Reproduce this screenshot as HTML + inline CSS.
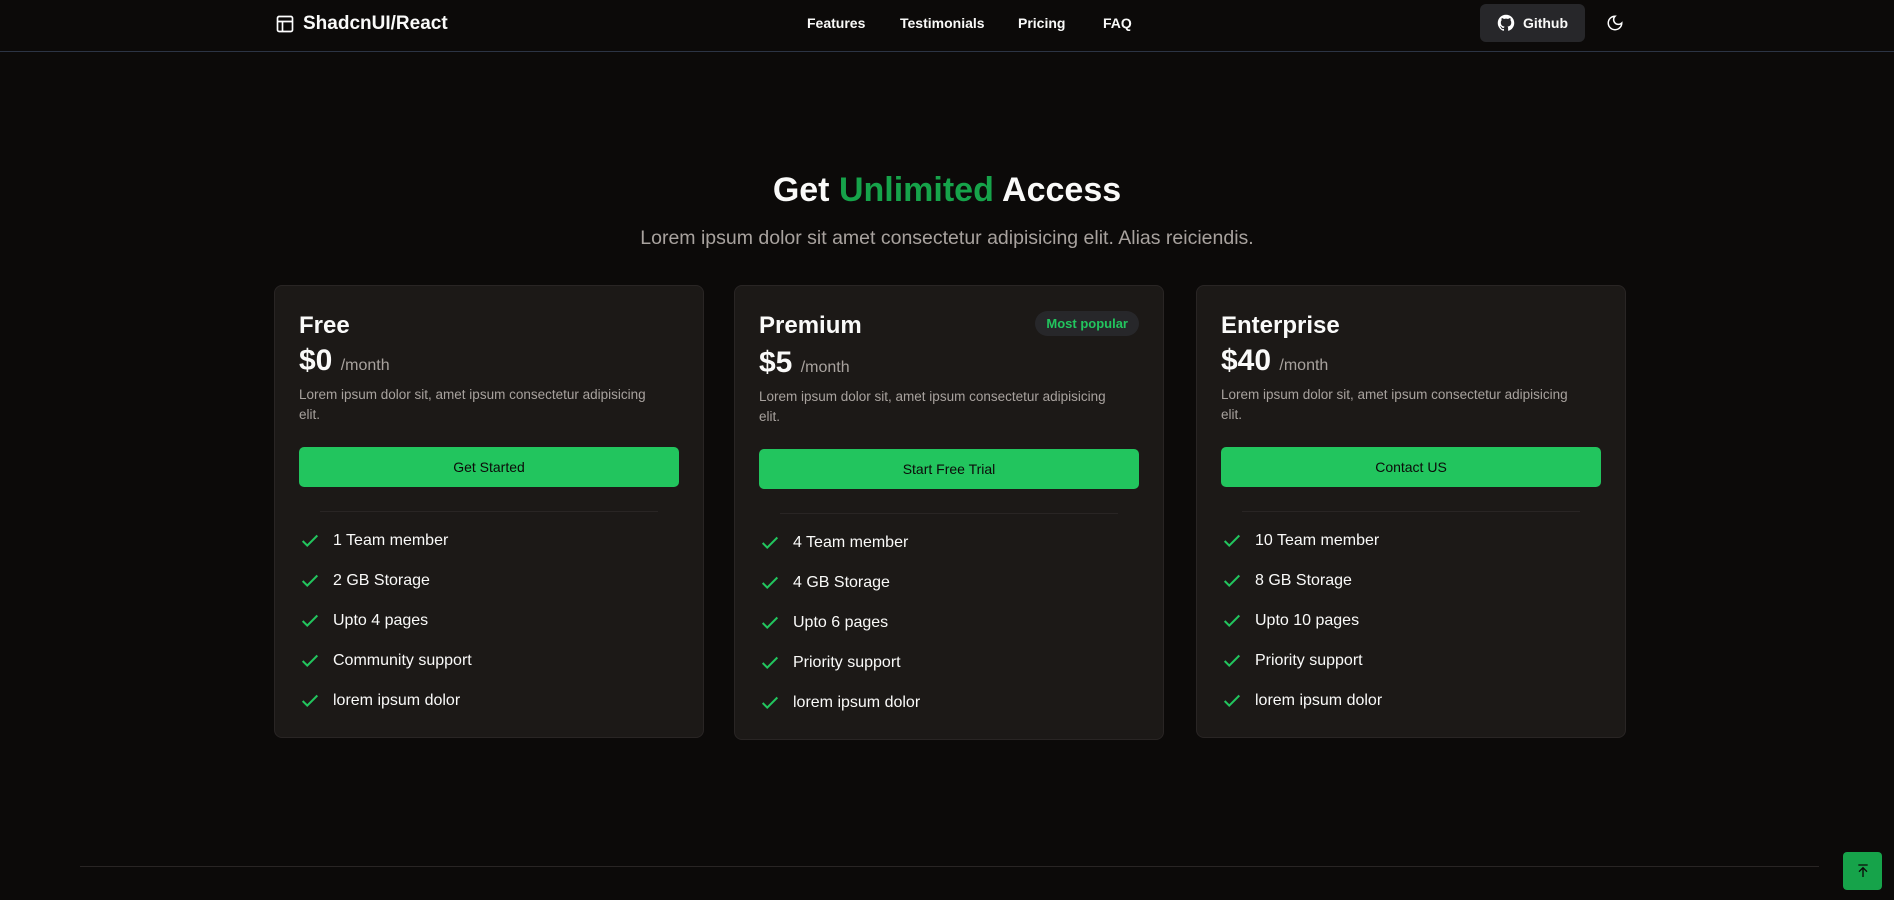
<!DOCTYPE html>
<html><head><meta charset="utf-8"><style>
*{box-sizing:border-box;margin:0;padding:0}
body{width:1894px;height:900px;background:#0c0a09;color:#fafaf9;font-family:"Liberation Sans",sans-serif;position:relative;overflow:hidden}
.nav{position:absolute;left:0;top:0;width:1894px;height:52px;border-bottom:1px solid #2c3444}
.logo{position:absolute;left:275px;top:13px;font-weight:bold;font-size:19px;display:flex;align-items:center;gap:8px}
.links a{position:absolute;top:15px;font-size:14px;font-weight:bold;color:#fafaf9;text-decoration:none}
.gh{position:absolute;left:1480px;top:4px;width:105px;height:38px;background:#27272a;border-radius:6px;display:flex;align-items:center;justify-content:center;gap:8px;font-size:14px;font-weight:bold}
.moon{position:absolute;left:1606px;top:14px}
h1{position:absolute;top:171px;width:100%;text-align:center;font-size:34px;font-weight:bold}
h1 span{color:#16a34a}
.sub{position:absolute;top:227px;width:100%;text-align:center;font-size:19.5px;color:#a8a29e}
.card{position:absolute;top:285px;width:430px;height:453px;background:#1c1917;border:1px solid #292524;border-radius:8px}
.t{position:absolute;left:24px;top:26px;font-size:24px;font-weight:bold}
.badge{position:absolute;right:24px;top:25px;background:#27272a;color:#22c55e;font-size:13px;font-weight:bold;padding:5px 11px;border-radius:14px}
.p{position:absolute;left:24px;top:58px;font-size:30px;font-weight:bold}
.p small{font-size:16px;font-weight:normal;color:#a8a29e}
.d{position:absolute;left:24px;top:99px;width:360px;font-size:13.5px;line-height:20px;color:#a8a29e}
.b{position:absolute;left:24px;top:161px;width:380px;height:40px;background:#22c55e;border-radius:5px;color:#0c0a09;font-size:14px;display:flex;align-items:center;justify-content:center}
.hr{position:absolute;left:45px;right:45px;top:225px;border-top:1px solid #292524}
ul{position:absolute;left:24px;top:235px;list-style:none}
li{height:40px;display:flex;align-items:center;font-size:16px;gap:12px}
.foot{position:absolute;left:80px;width:1739px;top:866px;border-top:1px solid #292524}
.top{position:absolute;left:1843px;top:852px;width:39px;height:38px;background:#16a34a;border-radius:4px;display:flex;align-items:center;justify-content:center}
</style></head><body>
<div class="nav">
<div class="logo"><svg width="20" height="20" viewBox="0 0 24 24" fill="none" stroke="#fff" stroke-width="2"><rect x="3" y="3" width="18" height="18" rx="2"/><path d="M3 9h18M9 9v12"/></svg>ShadcnUI/React</div>
<div class="links"><a style="left:807px">Features</a><a style="left:900px">Testimonials</a><a style="left:1018px">Pricing</a><a style="left:1103px">FAQ</a></div>
<div class="gh"><svg width="18" height="18" viewBox="0 0 24 24" fill="#fff"><path d="M12 1C5.9 1 1 5.9 1 12c0 4.9 3.2 9 7.5 10.4.6.1.8-.2.8-.5v-2c-3.1.7-3.7-1.3-3.7-1.3-.5-1.3-1.2-1.600-1.2-1.6-1-.7.1-.7.1-.7 1.1.1 1.7 1.1 1.7 1.1 1 1.7 2.6 1.2 3.2.9.1-.7.4-1.2.7-1.5-2.4-.3-5-1.2-5-5.4 0-1.200.4-2.2 1.1-3-.1-.3-.5-1.4.1-2.9 0 0 .9-.3 3 1.1a10 10 0 0 1 5.5 0c2.1-1.4 3-1.1 3-1.1.6 1.5.2 2.6.1 2.9.7.8 1.1 1.8 1.1 3 0 4.2-2.6 5.1-5 5.4.4.3.8 1 .8 2v3c0 .3.2.6.8.5C19.8 21 23 16.9 23 12 23 5.9 18.1 1 12 1z"/></svg>Github</div>
<svg class="moon" width="18" height="18" viewBox="0 0 24 24" fill="none" stroke="#fff" stroke-width="2"><path d="M12 3a6 6 0 0 0 9 9 9 9 0 1 1-9-9z"/></svg>
</div>
<h1>Get <span>Unlimited</span> Access</h1>
<div class="sub">Lorem ipsum dolor sit amet consectetur adipisicing elit. Alias reiciendis.</div>

<div class="card" style="left:274px">
<div class="t">Free</div><div class="p">$0 <small>/month</small></div>
<div class="d">Lorem ipsum dolor sit, amet ipsum consectetur adipisicing elit.</div>
<div class="b">Get Started</div><div class="hr"></div>
<ul><li>✓1 Team member</li><li>✓2 GB Storage</li><li>✓Upto 4 pages</li><li>✓Community support</li><li>✓lorem ipsum dolor</li></ul>
</div>
<div class="card" style="left:734px;height:455px">
<div class="t">Premium</div><div class="badge">Most popular</div><div class="p" style="top:60px">$5 <small>/month</small></div>
<div class="d" style="top:101px">Lorem ipsum dolor sit, amet ipsum consectetur adipisicing elit.</div>
<div class="b" style="top:163px">Start Free Trial</div><div class="hr" style="top:227px"></div>
<ul style="top:237px"><li>✓4 Team member</li><li>✓4 GB Storage</li><li>✓Upto 6 pages</li><li>✓Priority support</li><li>✓lorem ipsum dolor</li></ul>
</div>
<div class="card" style="left:1196px">
<div class="t">Enterprise</div><div class="p">$40 <small>/month</small></div>
<div class="d">Lorem ipsum dolor sit, amet ipsum consectetur adipisicing elit.</div>
<div class="b">Contact US</div><div class="hr"></div>
<ul><li>✓10 Team member</li><li>✓8 GB Storage</li><li>✓Upto 10 pages</li><li>✓Priority support</li><li>✓lorem ipsum dolor</li></ul>
</div>
<div class="foot"></div>
<div class="top"><svg width="16" height="16" viewBox="0 0 24 24" fill="none" stroke="#0c0a09" stroke-width="2"><path d="M5 3h14M12 21V8M6 13l6-6 6 6"/></svg></div>
<script>
document.querySelectorAll('li').forEach(l=>{l.innerHTML=l.innerHTML.replace('✓','<svg width="22" height="22" viewBox="0 0 24 24" fill="none" stroke="#22c55e" stroke-width="2.2"><path d="M4 12l5 5L20 6"/></svg>')});
</script>
</body></html>
